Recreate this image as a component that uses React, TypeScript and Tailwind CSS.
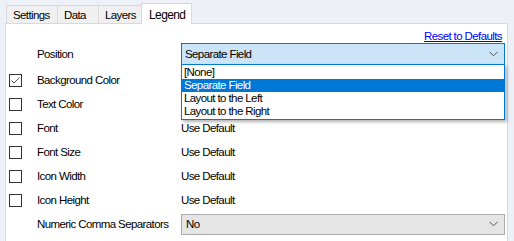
import { useState } from 'react'

type Row = {
  label: string
  check?: boolean
  checked?: boolean
  value?: string
}

const rows: Row[] = [
  { label: 'Background Color', check: true, checked: true },
  { label: 'Text Color', check: true },
  { label: 'Font', check: true, value: 'Use Default' },
  { label: 'Font Size', check: true, value: 'Use Default' },
  { label: 'Icon Width', check: true, value: 'Use Default' },
  { label: 'Icon Height', check: true, value: 'Use Default' },
]

const positions = ['[None]', 'Separate Field', 'Layout to the Left', 'Layout to the Right']

function Chevron() {
  return (
    <svg width="9" height="6" viewBox="0 0 9 6" className="shrink-0">
      <path d="M0.5 0.8 L4.5 4.8 L8.5 0.8" fill="none" stroke="#505050" strokeWidth="1" />
    </svg>
  )
}

function CheckBox({ checked }: { checked?: boolean }) {
  return (
    <div className="w-[13px] h-[13px] border border-[#333] bg-white flex items-center justify-center">
      {checked && (
        <svg width="11" height="11" viewBox="0 0 11 11">
          <path d="M1.5 5.5 L4 8 L9.5 2.5" fill="none" stroke="#555" strokeWidth="1" />
        </svg>
      )}
    </div>
  )
}

export default function App() {
  const [tab, setTab] = useState('Legend')
  const [position, setPosition] = useState('Separate Field')

  const tabs = [
    { name: 'Settings', w: 'w-[51px]' },
    { name: 'Data', w: 'w-[41px]' },
    { name: 'Layers', w: 'w-[43px]' },
    { name: 'Legend', w: 'w-[51px]' },
  ]

  return (
    <div
      className="w-[514px] h-[241px] bg-[#eef0f8] text-black text-[11.5px] tracking-[-0.6px] leading-none overflow-hidden flex flex-col"
      style={{ fontFamily: '"Liberation Sans", Arial, sans-serif' }}
    >
      <div className="h-[23px] flex items-end pl-[6px] shrink-0">
        {tabs.map((t) =>
          t.name === tab ? (
            <div
              key={t.name}
              className={`${t.w} h-[21px] -mb-px bg-white border border-b-0 border-[#d9d9d9] flex items-start pl-[7px] pt-[5px] text-[12px] relative z-10`}
              onClick={() => setTab(t.name)}
            >
              {t.name}
            </div>
          ) : (
            <div
              key={t.name}
              className={`${t.w} h-[18px] bg-[#f0f0f0] border border-b-0 border-r-0 border-[#d9d9d9] flex items-center pl-[6px] pt-[2px]`}
              onClick={() => setTab(t.name)}
            >
              {t.name}
            </div>
          ),
        )}
      </div>

      <div className="flex-1 ml-[5px] mr-[6px] bg-white border border-b-0 border-[#d9d9d9] relative">
        <div className="h-[18px] flex items-end justify-end pr-[5px]">
          <span className="text-[#0000ff] underline">Reset to Defaults</span>
        </div>

        <div className="h-[23px] flex items-center pt-px">
          <div className="w-[175px] pl-[31px] pt-px">Position</div>
          <div className="flex-1 mr-[2px] h-[22px] bg-[#cce4f7] border border-[#0078d7] flex items-center justify-between pl-[3px] pr-[6px]">
            <span className="pt-px">{position}</span>
            <Chevron />
          </div>
        </div>

        <div className="h-[3px]" />

        {rows.map((r) => (
          <div key={r.label} className="h-[24px] flex items-center">
            <div className="w-[31px] pl-[3px]">{r.check && <CheckBox checked={r.checked} />}</div>
            <div className="w-[144px] pt-px">{r.label}</div>
            <div className="pt-px">{r.value}</div>
          </div>
        ))}

        <div className="h-[24px] flex items-center">
          <div className="w-[175px] pl-[31px] pt-px">Numeric Comma Separators</div>
          <div className="flex-1 mr-[2px] h-[21px] bg-[#e5e5e5] border border-[#adadad] flex items-center justify-between pl-[4px] pr-[6px]">
            <span className="pt-px">No</span>
            <Chevron />
          </div>
        </div>

        <div className="absolute left-[175px] right-[2px] top-[40px] bg-white border border-[#0078d7] shadow-[2px_2px_3px_rgba(0,0,0,0.3)] z-20 py-px">
          {positions.map((p) => (
            <div
              key={p}
              className={`h-[13px] flex items-center pl-[2px] pt-px ${p === position ? 'bg-[#0078d7] text-white' : ''}`}
              onClick={() => setPosition(p)}
            >
              {p}
            </div>
          ))}
        </div>
      </div>
    </div>
  )
}
